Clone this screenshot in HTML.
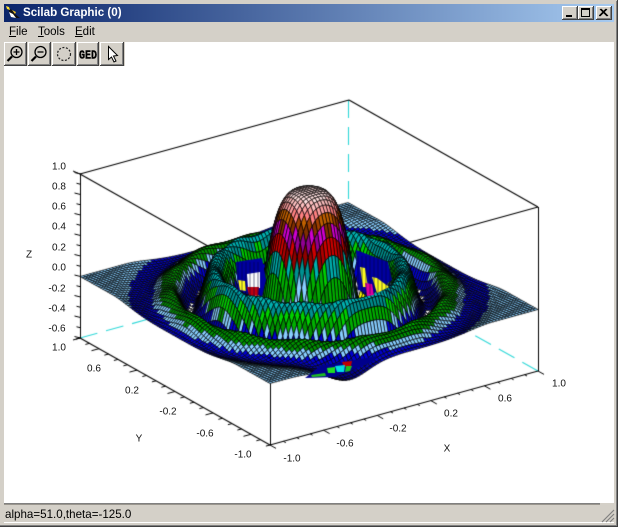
<!DOCTYPE html>
<html><head><meta charset="utf-8">
<style>
html,body{margin:0;padding:0;background:#d4d0c8}
body{position:relative;width:618px;height:527px;overflow:hidden;font-family:"Liberation Sans",sans-serif;font-size:12px;color:#000}
.a{position:absolute}
#title{left:4px;top:4px;width:610px;height:18px;background:linear-gradient(90deg,#0a246a,#a6caf0)}
#title span{position:absolute;left:19px;top:2px;color:#fff;font-weight:bold;font-size:11.6px;line-height:14px;white-space:nowrap}
.wb{position:absolute;top:6px;width:16px;height:14px;background:#d4d0c8;box-shadow:inset -1px -1px 0 #404040,inset 1px 1px 0 #fff,inset -2px -2px 0 #808080}
.m{position:absolute;top:26px;font-size:11.5px;line-height:13px}
.m u{text-decoration:underline}
#white{left:4px;top:42px;width:610px;height:461px;background:#fff}
.b{position:absolute;top:42px;height:24px;background:#d4d0c8;box-shadow:inset -1px -1px 0 #404040,inset 1px 1px 0 #fff,inset -2px -2px 0 #808080}
.b svg{position:absolute;left:0;top:0}
#tb{left:4px;top:42px;width:121px;height:24px;background:#d4d0c8}
.t{position:absolute;font-size:10px;line-height:11px;white-space:nowrap;color:#111;transform:translate(-50%,-50%)}
#st{left:5px;top:508px;font-size:11.6px;line-height:14px;white-space:nowrap}
canvas{position:absolute;left:0;top:0}
</style></head><body>
<div class="a" style="left:0;top:0;width:618px;height:1px;background:#d4d0c8"></div>
<div class="a" id="title"><span>Scilab Graphic (0)</span></div>
<svg class="a" style="left:5px;top:5px" width="17" height="16" viewBox="0 0 17 16"><path d="M3 3 L7 5 L10 9 L15 13 L10 13 L5 9 Z" fill="#111"/><path d="M4 7 L8 9 L11 13 L6 12 Z" fill="#fff"/><path d="M1 1 L4 2 L5 5 L2 4 Z" fill="#ffe030"/><path d="M7 5 L11 7 L10 9 Z" fill="#f0c020"/></svg>
<div class="wb" style="left:562px"><div class="a" style="left:4px;top:9px;width:6px;height:2px;background:#000"></div></div>
<div class="wb" style="left:578px"><div class="a" style="left:3px;top:2px;width:9px;height:9px;box-sizing:border-box;border:1px solid #000;border-top-width:2px"></div></div>
<div class="wb" style="left:596px"><svg class="a" style="left:3px;top:2px" width="10" height="10"><path d="M1 1 L8 8 M8 1 L1 8 M2 1 L9 8 M7 1 L0 8" stroke="#000" stroke-width="1"/></svg></div>
<div class="m" style="left:9px"><u>F</u>ile</div>
<div class="m" style="left:38px"><u>T</u>ools</div>
<div class="m" style="left:75px"><u>E</u>dit</div>
<div class="a" id="white"></div>
<canvas id="c" width="618" height="527"></canvas>
<div class="a" id="tb"></div>
<div class="b" style="left:4px;width:23px"><svg width="23" height="24"><circle cx="12.5" cy="10" r="5.5" fill="none" stroke="#000" stroke-width="1.3"/><path d="M8 14.5 L3.5 19" stroke="#000" stroke-width="2.2"/><path d="M9.5 10 H15.5 M12.5 7 V13" stroke="#000" stroke-width="1.3"/></svg></div>
<div class="b" style="left:28px;width:23px"><svg width="23" height="24"><circle cx="12.5" cy="10" r="5.5" fill="none" stroke="#000" stroke-width="1.3"/><path d="M8 14.5 L3.5 19" stroke="#000" stroke-width="2.2"/><path d="M9.5 10 H15.5" stroke="#000" stroke-width="1.3"/></svg></div>
<div class="b" style="left:52px;width:24px"><svg width="24" height="24"><circle cx="12" cy="12" r="6.5" fill="none" stroke="#222" stroke-width="1.2" stroke-dasharray="2 1.6"/></svg></div>
<div class="b" style="left:77px;width:22px"><svg width="22" height="24"><text x="11" y="16.5" text-anchor="middle" font-family="Liberation Mono,monospace" font-weight="bold" font-size="12" textLength="18" lengthAdjust="spacingAndGlyphs" stroke="#000" stroke-width=".4">GED</text></svg></div>
<div class="b" style="left:100px;width:24px"><svg width="24" height="24"><path d="M8.5 4.5 V17.5 L11.5 15 L14 20 L16 19 L13.5 14 L17.5 13.5 Z" fill="#fff" stroke="#000" stroke-width="1"/></svg></div>

<div class="t" style="left:59px;top:167px">1.0</div>
<div class="t" style="left:59px;top:187px">0.8</div>
<div class="t" style="left:59px;top:207px">0.6</div>
<div class="t" style="left:59px;top:227px">0.4</div>
<div class="t" style="left:59px;top:248px">0.2</div>
<div class="t" style="left:59px;top:268px">0.0</div>
<div class="t" style="left:57px;top:289px">-0.2</div>
<div class="t" style="left:57px;top:309px">-0.4</div>
<div class="t" style="left:57px;top:329px">-0.6</div>
<div class="t" style="left:29px;top:255px">Z</div>
<div class="t" style="left:59px;top:348px">1.0</div>
<div class="t" style="left:94px;top:369px">0.6</div>
<div class="t" style="left:132px;top:391px">0.2</div>
<div class="t" style="left:168px;top:412px">-0.2</div>
<div class="t" style="left:205px;top:434px">-0.6</div>
<div class="t" style="left:243px;top:455px">-1.0</div>
<div class="t" style="left:139px;top:439px">Y</div>
<div class="t" style="left:292px;top:459px">-1.0</div>
<div class="t" style="left:345px;top:444px">-0.6</div>
<div class="t" style="left:398px;top:429px">-0.2</div>
<div class="t" style="left:451px;top:414px">0.2</div>
<div class="t" style="left:505px;top:399px">0.6</div>
<div class="t" style="left:559px;top:384px">1.0</div>
<div class="t" style="left:447px;top:449px">X</div>

<div class="a" style="left:4px;top:503px;width:596px;height:1px;background:#808080"></div>
<div class="a" style="left:4px;top:504px;width:596px;height:1px;background:#9a968e"></div>
<div class="a" style="left:4px;top:522px;width:610px;height:1px;background:#fff"></div>
<div class="a" style="left:0;top:525px;width:618px;height:1px;background:#808080"></div>
<div class="a" style="left:0;top:526px;width:618px;height:1px;background:#404040"></div>
<div class="a" style="left:617px;top:0;width:1px;height:527px;background:#404040"></div>
<div class="a" style="left:616px;top:1px;width:1px;height:525px;background:#808080"></div>
<div class="a" id="st">alpha=51.0,theta=-125.0</div>
<svg class="a" style="left:601px;top:509px" width="14" height="14"><path d="M13 1 L1 13 M13 5 L5 13 M13 9 L9 13" stroke="#808080" stroke-width="1.2"/></svg>
<script>
var ctx=document.getElementById('c').getContext('2d');
function P(x,y,z){return [309+134*x-95*y,354.5-37*x-53.5*y-102.5*(z+0.6)];}
var cmap=[[0,0,0],[0,0,255],[0,255,0],[0,255,255],[255,0,0],[255,0,255],[255,255,0],[255,255,255],
[0,0,144],[0,0,176],[0,0,208],[135,206,255],[0,144,0],[0,176,0],[0,208,0],[0,144,144],[0,176,176],[0,208,208],
[144,0,0],[176,0,0],[208,0,0],[144,0,144],[176,0,176],[208,0,208],[128,48,0],[160,64,0],[192,96,0],
[255,128,128],[255,160,160],[255,192,192],[255,224,224],[255,215,0]];
var R0=.29;
var K=[[.39,-.38],[.58,.27],[.72,-.2],[.84,.07],[1.0,-.06],[1.2,.0],[1.42,0]];
function prof(r){
 if(r<R0)return Math.cos(Math.PI/2*Math.pow(r/R0,2));
 if(r<.39)return -.38*Math.sin((r-R0)/(.39-R0)*Math.PI/2);
 for(var i=1;i<K.length;i++){if(r<=K[i][0]){var t=(r-K[i-1][0])/(K[i][0]-K[i-1][0]);t=(1-Math.cos(Math.PI*t))/2;return K[i-1][1]+(K[i][1]-K[i-1][1])*t;}}
 return 0;
}
function Z(x,y){
 var r=Math.sqrt(x*x+y*y),z=prof(r);
 if(r>.45&&r<.95)z+=.012*Math.cos(14*Math.atan2(y,x));
 var dx=x+0.42,dy=y+1;
 z-=0.14*Math.exp(-(dx*dx+dy*dy*2)/(2*0.14*0.14));
 return z;
}
function line(a,b,c,d,col,w,dash){ctx.beginPath();ctx.strokeStyle=col||'#000';ctx.lineWidth=w||1;ctx.setLineDash(dash||[]);ctx.moveTo(a,b);ctx.lineTo(c,d);ctx.stroke();ctx.setLineDash([]);}
line(80,338,348,264,'#30d8d8',1.1,[18,9]);
line(538,371,348,264,'#30d8d8',1.1,[18,9]);
line(348.5,100,348.5,264,'#30d8d8',1.1,[18,9]);
line(80,174,349,100,'#000',1.1);line(349,100,538,207,'#000',1.1);line(80,174,270,281,'#000',1.1);line(538,207,270,281,'#000',1.1);
line(80.5,174,80.5,338);line(538.5,207,538.5,371);line(270.5,281,270.5,445);
var n=84,i,j;
for(i=n-1;i>=0;i--)for(j=n-1;j>=0;j--){
 var x0=-1+2*i/n,x1=-1+2*(i+1)/n,y0=-1+2*j/n,y1=-1+2*(j+1)/n;
 var a=Z(x0,y0),b=Z(x1,y0),c=Z(x1,y1),d=Z(x0,y1),m=(a+b+c+d)/4;
 var rc=Math.sqrt((x0+x1)*(x0+x1)+(y0+y1)*(y0+y1))/2,idx;
 if(rc<.34&&m>=0){idx=m>=.2?31*(m+.3)/1.3:(m>=.04?12+(m-.04)/.16*2:11);}
 else idx=31*(m+0.6)/1.6;
 idx=Math.floor(idx);if(idx<0)idx=0;if(idx>31)idx=31;
 var q=[P(x0,y0,a),P(x1,y0,b),P(x1,y1,c),P(x0,y1,d)],C=cmap[idx];
 ctx.beginPath();ctx.moveTo(q[0][0],q[0][1]);ctx.lineTo(q[1][0],q[1][1]);ctx.lineTo(q[2][0],q[2][1]);ctx.lineTo(q[3][0],q[3][1]);ctx.closePath();
 ctx.fillStyle='rgb('+C+')';ctx.fill();ctx.strokeStyle='rgba(0,0,0,.9)';ctx.lineWidth=.75;ctx.stroke();
}
function poly(c,p){ctx.beginPath();ctx.moveTo(p[0],p[1]);for(var i=2;i<p.length;i+=2)ctx.lineTo(p[i],p[i+1]);ctx.closePath();ctx.fillStyle=c;ctx.fill();}
// front-edge low patches
poly('#00008c',[305,378,335,377,372,362,378,356,320,366]);
poly('#c00000',[342,362,352,361,351,366,344,367]);
poly('#00e0e0',[335,366,345,365,344,372,337,372]);
poly('#20e020',[327,368,335,367,335,373,328,373]);
poly('#20c020',[311,375,325,373,326,376,312,377]);
poly('#20c020',[346,366,352,366,350,371,345,372]);
// trough patches left of peak
poly('#0000a0',[236,262,262,258,266,280,262,296,238,290]);
poly('#ffff20',[238,280,245,281,246,291,240,290]);
poly('#ffffff',[247,274,260,272,260,288,248,288]);
poly('#c00010',[247,287,259,287,258,296,249,295]);
// trough patches right of peak
poly('#0000a0',[356,250,388,262,392,280,372,294,358,290]);
poly('#ffff20',[360,267,365,268,368,287,363,287]);
poly('#ffff20',[372,277,377,278,389,287,377,293]);
poly('#e000a0',[365,283,372,284,374,295,367,296]);
ctx.strokeStyle='rgba(0,0,0,.75)';ctx.lineWidth=.8;
for(i=238;i<262;i+=4){line(i,262,i,296,'rgba(0,0,60,.7)',.8);}
for(i=358;i<392;i+=4){line(i,256,i,294,'rgba(0,0,60,.7)',.8);}
line(270.5,385,270.5,445);line(80,338,270,445,'#000',1.1);line(270,445,538,371,'#000',1.1);
for(i=0;i<=16;i++){var yy=174+i*10.25,l=(i%2==0)?6:4;line(80.5,yy,80.5-l,yy-(i%2==0?1.5:1));}
line(80,174,73,171);line(80,338,73,340);
for(i=0;i<=20;i++){var t=i/20,px=80+190*t,py=338+107*t,l=(i%4==2)?1:0.55;line(px,py,px-7.5*l,py+2*l);}
for(i=0;i<=20;i++){var t=i/20,px=270+268*t,py=445-74*t,l=(i%4==0)?1:0.4;line(px,py,px+6*l,py+3.4*l);}
</script>
</body></html>
